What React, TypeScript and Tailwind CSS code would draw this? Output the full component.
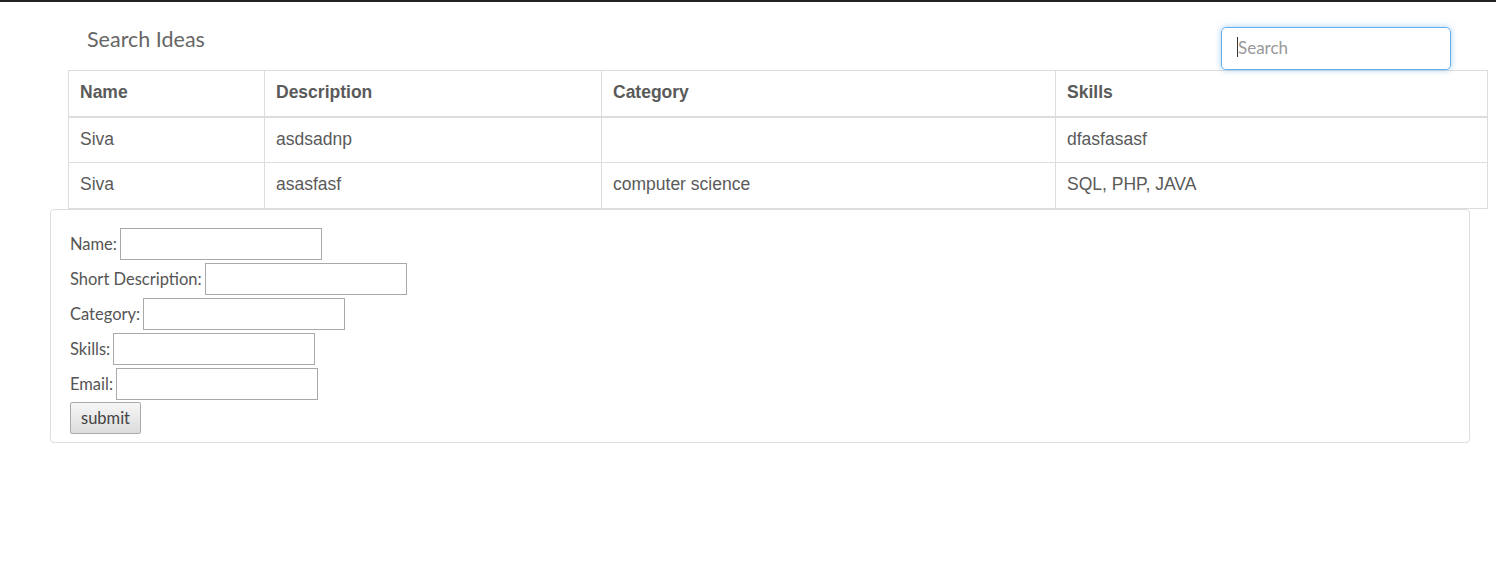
import React from 'react'

const rows = [
  { name: 'Siva', description: 'asdsadnp', category: '', skills: 'dfasfasasf' },
  { name: 'Siva', description: 'asasfasf', category: 'computer science', skills: 'SQL, PHP, JAVA' },
]

const fields = ['Name:', 'Short Description:', 'Category:', 'Skills:', 'Email:']

export default function App() {
  return (
    <div className="min-h-[570px] w-[1496px] bg-white border-t-2 border-[#222]">
      {/* Title + search */}
      <div className="relative h-[68px]">
        <h1 className="absolute left-[87px] top-[21px] text-[21.5px] text-[#666] font-['Lato',sans-serif]">
          Search Ideas
        </h1>
        <div className="absolute left-[1221px] top-[25px] w-[230px] h-[43px]">
          <input
            placeholder="Search"
            className="w-full h-full rounded-[5px] border border-[#66afe9] pl-4 pb-[3px] text-[17px] font-['Lato',sans-serif] placeholder:text-[#999] outline-none shadow-[0_0_6px_rgba(102,175,233,0.6)]"
          />
          <span className="absolute left-[16px] top-[10px] w-px h-[20px] bg-[#333]" />
        </div>
      </div>

      {/* Table */}
      <table className="ml-[68px] w-[1420px] border-collapse font-['Liberation_Sans',Arial,sans-serif] text-[17.5px] text-[#5a5a5a]">
        <thead>
          <tr className="h-[46px]">
            <th className="w-[196px] border border-[#ddd] border-b-2 px-[11px] pb-[2px] text-left font-bold">Name</th>
            <th className="w-[337px] border border-[#ddd] border-b-2 px-[11px] pb-[2px] text-left font-bold">Description</th>
            <th className="w-[454px] border border-[#ddd] border-b-2 px-[11px] pb-[2px] text-left font-bold">Category</th>
            <th className="border border-[#ddd] border-b-2 px-[11px] pb-[2px] text-left font-bold">Skills</th>
          </tr>
        </thead>
        <tbody>
          {rows.map((r, i) => (
            <tr key={i} className="h-[46px]">
              <td className="border border-[#ddd] px-[11px] pb-[2px]">{r.name}</td>
              <td className="border border-[#ddd] px-[11px] pb-[2px]">{r.description}</td>
              <td className="border border-[#ddd] px-[11px] pb-[2px]">{r.category}</td>
              <td className="border border-[#ddd] px-[11px] pb-[2px]">{r.skills}</td>
            </tr>
          ))}
        </tbody>
      </table>

      {/* Form */}
      <div className="ml-[50px] w-[1420px] rounded-[4px] border border-[#ddd] pt-[18px] pb-[8px] px-[19px] font-['Lato',sans-serif] text-[16.5px] text-[#555]">
        <div className="flex flex-col gap-[3px]">
          {fields.map((f) => (
            <div key={f} className="flex items-center gap-[3px]">
              <label>{f}</label>
              <input className="w-[202px] h-[32px] border border-[#a9a9a9] outline-none" />
            </div>
          ))}
          <div className="-mt-[1px]">
            <button className="h-[32px] w-[71px] rounded-[2px] border border-[#aaa] bg-gradient-to-b from-[#f6f6f6] to-[#dcdcdc] text-[16.5px] text-[#444]">
              submit
            </button>
          </div>
        </div>
      </div>
    </div>
  )
}
